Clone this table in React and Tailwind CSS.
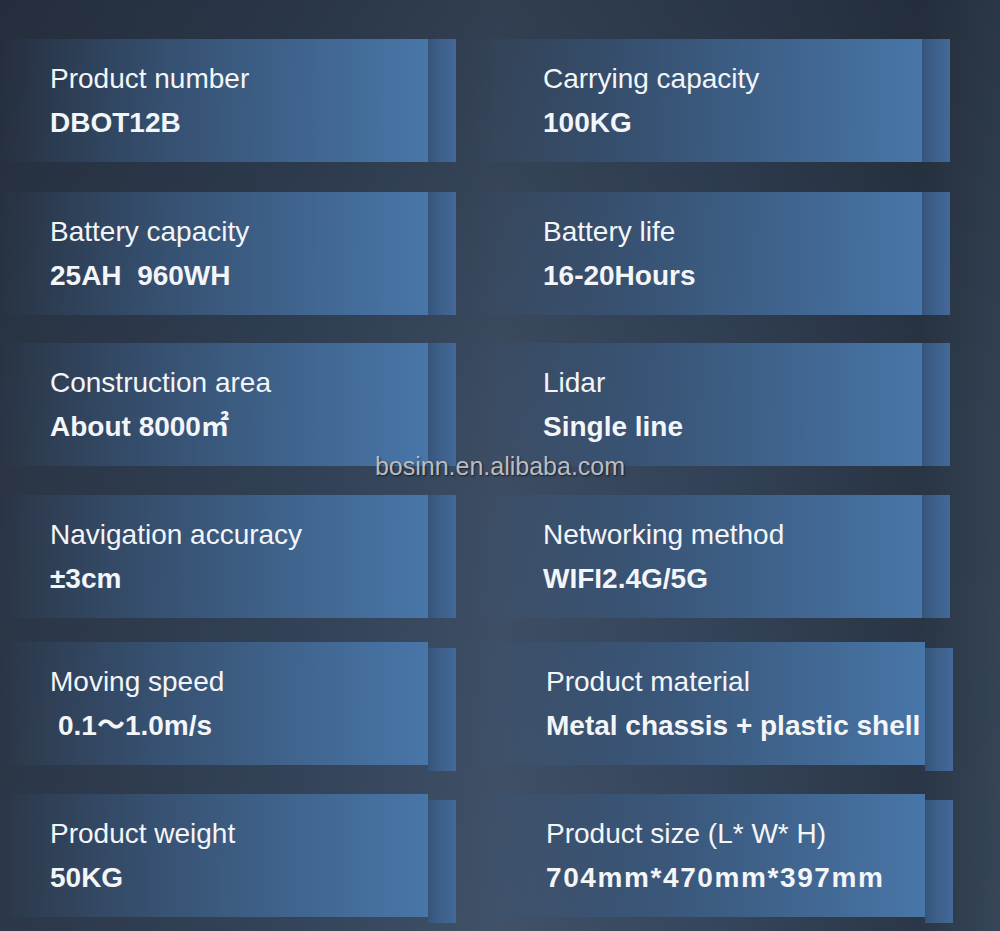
const rows = [
  {
    mt: 'mt-[39px]',
    shift: false,
    left: { label: 'Product number', value: 'DBOT12B' },
    right: { label: 'Carrying capacity', value: '100KG' },
  },
  {
    mt: 'mt-[30px]',
    shift: false,
    left: { label: 'Battery capacity', value: '25AH\u00a0\u00a0960WH' },
    right: { label: 'Battery life', value: '16-20Hours' },
  },
  {
    mt: 'mt-[28px]',
    shift: false,
    left: { label: 'Construction area', value: 'About 8000㎡' },
    right: { label: 'Lidar', value: 'Single line' },
  },
  {
    mt: 'mt-[29px]',
    shift: false,
    left: { label: 'Navigation accuracy', value: '±3cm' },
    right: { label: 'Networking method', value: 'WIFI2.4G/5G' },
  },
  {
    mt: 'mt-[24px]',
    shift: true,
    left: { label: 'Moving speed', value: '0.1～1.0m/s', indent: true },
    right: { label: 'Product material', value: 'Metal chassis + plastic shell' },
  },
  {
    mt: 'mt-[23px]',
    shift: true,
    left: { label: 'Product weight', value: '50KG' },
    right: { label: 'Product size (L* W* H)', value: '704mm*470mm*397mm', wide: true },
  },
]

function Spec({ label, value, indent, wide }) {
  let valueClass = 'font-bold'
  if (indent) valueClass = 'pl-[8px] font-bold'
  if (wide) valueClass = 'font-bold tracking-[1.6px]'
  return (
    <div className="flex flex-col text-[28px] leading-[44px] text-[#f3f5f8]">
      <span>{label}</span>
      <span className={valueClass}>{value}</span>
    </div>
  )
}

function Card({ item, shift, side }) {
  const pad = side === 'left' ? 'pl-[50px]' : shift ? 'pl-[76px]' : 'pl-[73px]'
  return (
    <div className="flex items-start">
      <div
        className={`h-[123px] flex-1 pt-[18px] ${pad} bg-gradient-to-r from-[rgba(52,78,110,0)] via-[rgba(58,90,128,0.75)] via-40% to-[#4876a8]`}
      >
        <Spec {...item} />
      </div>
      <div
        className={`w-[28px] h-[123px] bg-gradient-to-r from-[#35547a] via-[#3d5f88] via-40% to-[#43699a] ${shift ? 'mt-[6px]' : ''}`}
      />
    </div>
  )
}

export default function App() {
  return (
    <div
      className="relative w-[1000px] h-[931px] overflow-hidden bg-[linear-gradient(180deg,rgba(22,28,38,0.35)_0%,rgba(22,28,38,0.1)_45%,rgba(22,28,38,0)_100%),linear-gradient(90deg,#2c3748_0%,#34445a_30%,#405168_50%,#35455b_72%,#2b3747_92%,#364658_100%)]"
      style={{ fontFamily: '"Liberation Sans", Arial, "Noto Sans CJK SC", sans-serif' }}
    >
      <div className="flex flex-col">
        {rows.map((r, i) => (
          <div key={i} className={`flex ${r.mt}`}>
            <div className="w-[456px]">
              <Card item={r.left} shift={r.shift} side="left" />
            </div>
            <div className={r.shift ? 'ml-[14px] w-[483px]' : 'ml-[14px] w-[480px]'}>
              <Card item={r.right} shift={r.shift} side="right" />
            </div>
          </div>
        ))}
      </div>
      <div className="absolute left-1/2 top-[451px] -translate-x-1/2 text-[25px] leading-[30px] text-[#b9bdc3] [text-shadow:1px_1px_2px_rgba(0,0,0,0.6)] whitespace-nowrap">
        bosinn.en.alibaba.com
      </div>
    </div>
  )
}
